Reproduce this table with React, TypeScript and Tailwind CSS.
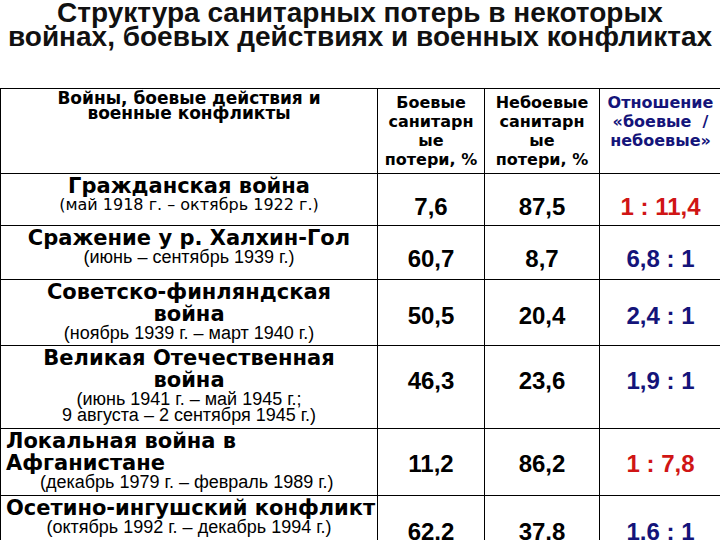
const rows = [
  {
    h: 'h-[52px]',
    name: ['Гражданская война'],
    dates: ['(май 1918 г. – октябрь 1922 г.)'],
    dateFont: 'font-["DejaVu_Sans",sans-serif] text-[16px]',
    align: 'text-center',
    numPad: 'pt-[19px]',
    a: '7,6',
    b: '87,5',
    r: '1 : 11,4',
    red: true,
  },
  {
    h: 'h-[54px]',
    name: ['Сражение у р. Халхин-Гол'],
    dates: ['(июнь – сентябрь 1939 г.)'],
    dateFont: 'font-["Liberation_Sans",sans-serif] text-[18px]',
    align: 'text-center',
    numPad: 'pt-[19px]',
    a: '60,7',
    b: '8,7',
    r: '6,8 : 1',
    red: false,
  },
  {
    h: 'h-[66px]',
    name: ['Советско-финляндская', 'война'],
    dates: ['(ноябрь 1939 г. – март 1940 г.)'],
    dateFont: 'font-["Liberation_Sans",sans-serif] text-[18px]',
    align: 'text-center',
    numPad: 'pt-[22px]',
    a: '50,5',
    b: '20,4',
    r: '2,4 : 1',
    red: false,
  },
  {
    h: 'h-[83px]',
    name: ['Великая Отечественная', 'война'],
    dates: ['(июнь 1941 г. –  май 1945 г.;', '9 августа – 2 сентября 1945 г.)'],
    dateFont: 'font-["Liberation_Sans",sans-serif] text-[18px]',
    align: 'text-center',
    numPad: 'pt-[21px]',
    a: '46,3',
    b: '23,6',
    r: '1,9 : 1',
    red: false,
  },
  {
    h: 'h-[67px]',
    name: ['Локальная война в', 'Афганистане'],
    dates: ['(декабрь 1979 г. – февраль 1989 г.)'],
    dateFont: 'font-["Liberation_Sans",sans-serif] text-[18px]',
    align: 'text-left',
    numPad: 'pt-[21px]',
    a: '11,2',
    b: '86,2',
    r: '1 : 7,8',
    red: true,
  },
  {
    h: 'h-[60px]',
    name: ['Осетино-ингушский конфликт'],
    dates: ['(октябрь 1992 г. – декабрь 1994 г.)'],
    dateFont: 'font-["Liberation_Sans",sans-serif] text-[18px]',
    align: 'text-center',
    numPad: 'pt-[22px]',
    a: '62,2',
    b: '37,8',
    r: '1,6 : 1',
    red: false,
  },
]

const num = 'font-["Liberation_Sans",sans-serif] font-bold text-[24px] leading-[28px] text-center'
const colHead = 'h-[85px] border-b-[1.5px] border-black pt-[4px] text-center font-["DejaVu_Sans",sans-serif] font-bold text-[16px] leading-[19px]'

export default function App() {
  return (
    <div className="w-[720px] h-[540px] overflow-hidden bg-white text-black">
      <h1 className='h-[88px] pt-[1px] text-center font-["Liberation_Sans_Narrow","Liberation_Sans",sans-serif] font-bold text-[28px] leading-[24px] text-[#111] whitespace-nowrap'>
        Структура санитарных потерь в некоторых
        <br />
        войнах, боевых действиях и военных конфликтах
      </h1>

      <div className="grid grid-cols-[377px_107px_115px_121px] border-t-[1.5px] border-l-[1.5px] border-black">
        <div className='h-[85px] border-r-[1.5px] border-b-[1.5px] border-black pt-[2px] text-center font-["DejaVu_Sans",sans-serif] font-bold text-[17px] leading-[15px]'>
          Войны, боевые действия и
          <br />
          военные конфликты
        </div>
        <div className={`${colHead} border-r-[1.5px]`}>
          Боевые
          <br />
          санитарн
          <br />
          ые
          <br />
          потери, %
        </div>
        <div className={`${colHead} border-r-[1.5px]`}>
          Небоевые
          <br />
          санитарн
          <br />
          ые
          <br />
          потери, %
        </div>
        <div className={`${colHead} text-[#14147a]`}>
          Отношение
          <br />
          «боевые&nbsp;&nbsp;/
          <br />
          небоевые»
        </div>

        {rows.map((row, i) => (
          <Row key={i} row={row} />
        ))}
      </div>
    </div>
  )
}

function Row({ row }: { row: (typeof rows)[number] }) {
  const cell = `${row.h} border-r-[1.5px] border-b-[1.5px] border-black`
  return (
    <>
      <div className={`${cell} ${row.align} px-[5px] pt-[1px] overflow-hidden`}>
        <div className='font-["DejaVu_Sans",sans-serif] font-bold text-[21px] leading-[22px] whitespace-nowrap'>
          {row.name.map((n, i) => (
            <div key={i}>{n}</div>
          ))}
        </div>
        <div className={`${row.dateFont} leading-[16px] whitespace-nowrap ${row.align === 'text-left' ? 'pl-[34px]' : ''}`}>
          {row.dates.map((d, i) => (
            <div key={i}>{d}</div>
          ))}
        </div>
      </div>
      <div className={`${cell} ${row.numPad} ${num}`}>{row.a}</div>
      <div className={`${cell} ${row.numPad} ${num}`}>{row.b}</div>
      <div
        className={`${row.h} border-b-[1.5px] border-black ${row.numPad} ${num} ${
          row.red ? 'text-[#d01515]' : 'text-[#14147a]'
        }`}
      >
        {row.r}
      </div>
    </>
  )
}
